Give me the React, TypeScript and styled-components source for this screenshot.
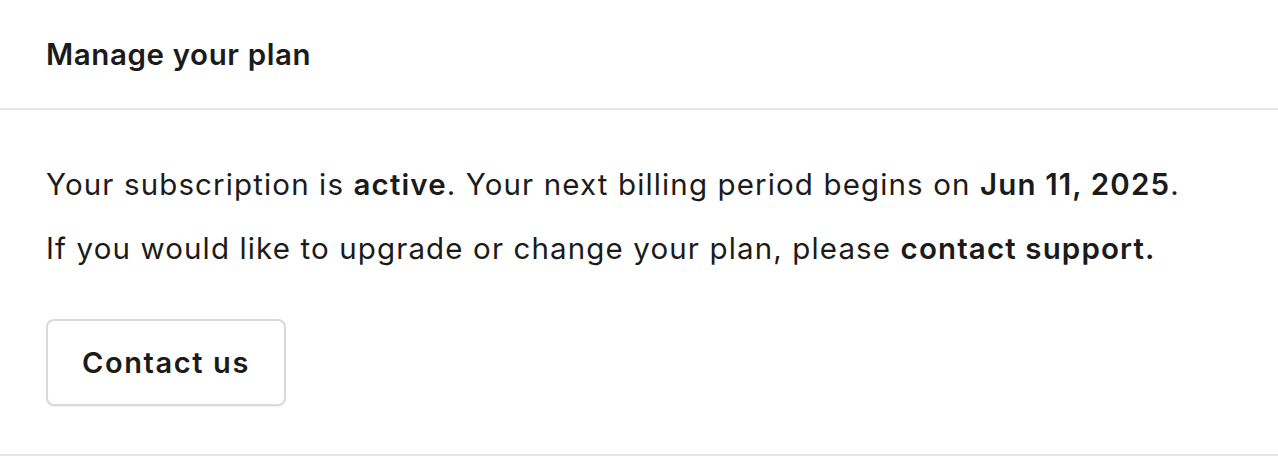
import React from "react"
import styled, { createGlobalStyle } from "styled-components"

const GlobalStyle = createGlobalStyle`
  html, body {
    margin: 0;
    padding: 0;
    background: #ffffff;
  }
  body {
    font-family: Inter, "Noto Sans", "Liberation Sans", sans-serif;
    color: #1b1b1b;
  }
`

const App = () => {
  return (
    <>
      <GlobalStyle />
      <Card>
        <Header>
          <Title>Manage your plan</Title>
        </Header>
        <Body>
          <Text>
            Your subscription is <b>active</b>. Your next billing period begins on{" "}
            <b>Jun 11, 2025</b>.
          </Text>
          <Text>
            If you would like to upgrade or change your plan, please{" "}
            <b>contact support.</b>
          </Text>
          <Actions>
            <Button type="button">Contact us</Button>
          </Actions>
        </Body>
      </Card>
    </>
  )
}

export default App

const Card = styled.div`
  width: 1278px;
  height: 456px;
  box-sizing: border-box;
  border-bottom: 2px solid #e6e6e6;
  display: flex;
  flex-direction: column;
`

const Header = styled.div`
  height: 110px;
  box-sizing: border-box;
  padding: 0 46px;
  display: flex;
  align-items: center;
  border-bottom: 2px solid #e6e6e6;
`

const Title = styled.h2`
  margin: 0;
  font-size: 29.5px;
  font-weight: 600;
  letter-spacing: 0.6px;
`

const Body = styled.div`
  padding: 54px 46px 0;
  display: flex;
  flex-direction: column;
  gap: 24px;
`

const Text = styled.p`
  margin: 0;
  font-size: 29.5px;
  line-height: 40px;
  letter-spacing: 1.13px;

  & b {
    font-weight: 600;
  }
`

const Actions = styled.div`
  display: flex;
  padding-top: 27px;
`

const Button = styled.button`
  font-family: inherit;
  font-size: 29px;
  font-weight: 600;
  letter-spacing: 1.6px;
  color: #1b1b1b;
  background: #ffffff;
  width: 240px;
  height: 87px;
  border: 2px solid #d9d9d9;
  border-radius: 8px;
  box-shadow: 0 1px 2px rgba(0, 0, 0, 0.06);
  cursor: pointer;
`
